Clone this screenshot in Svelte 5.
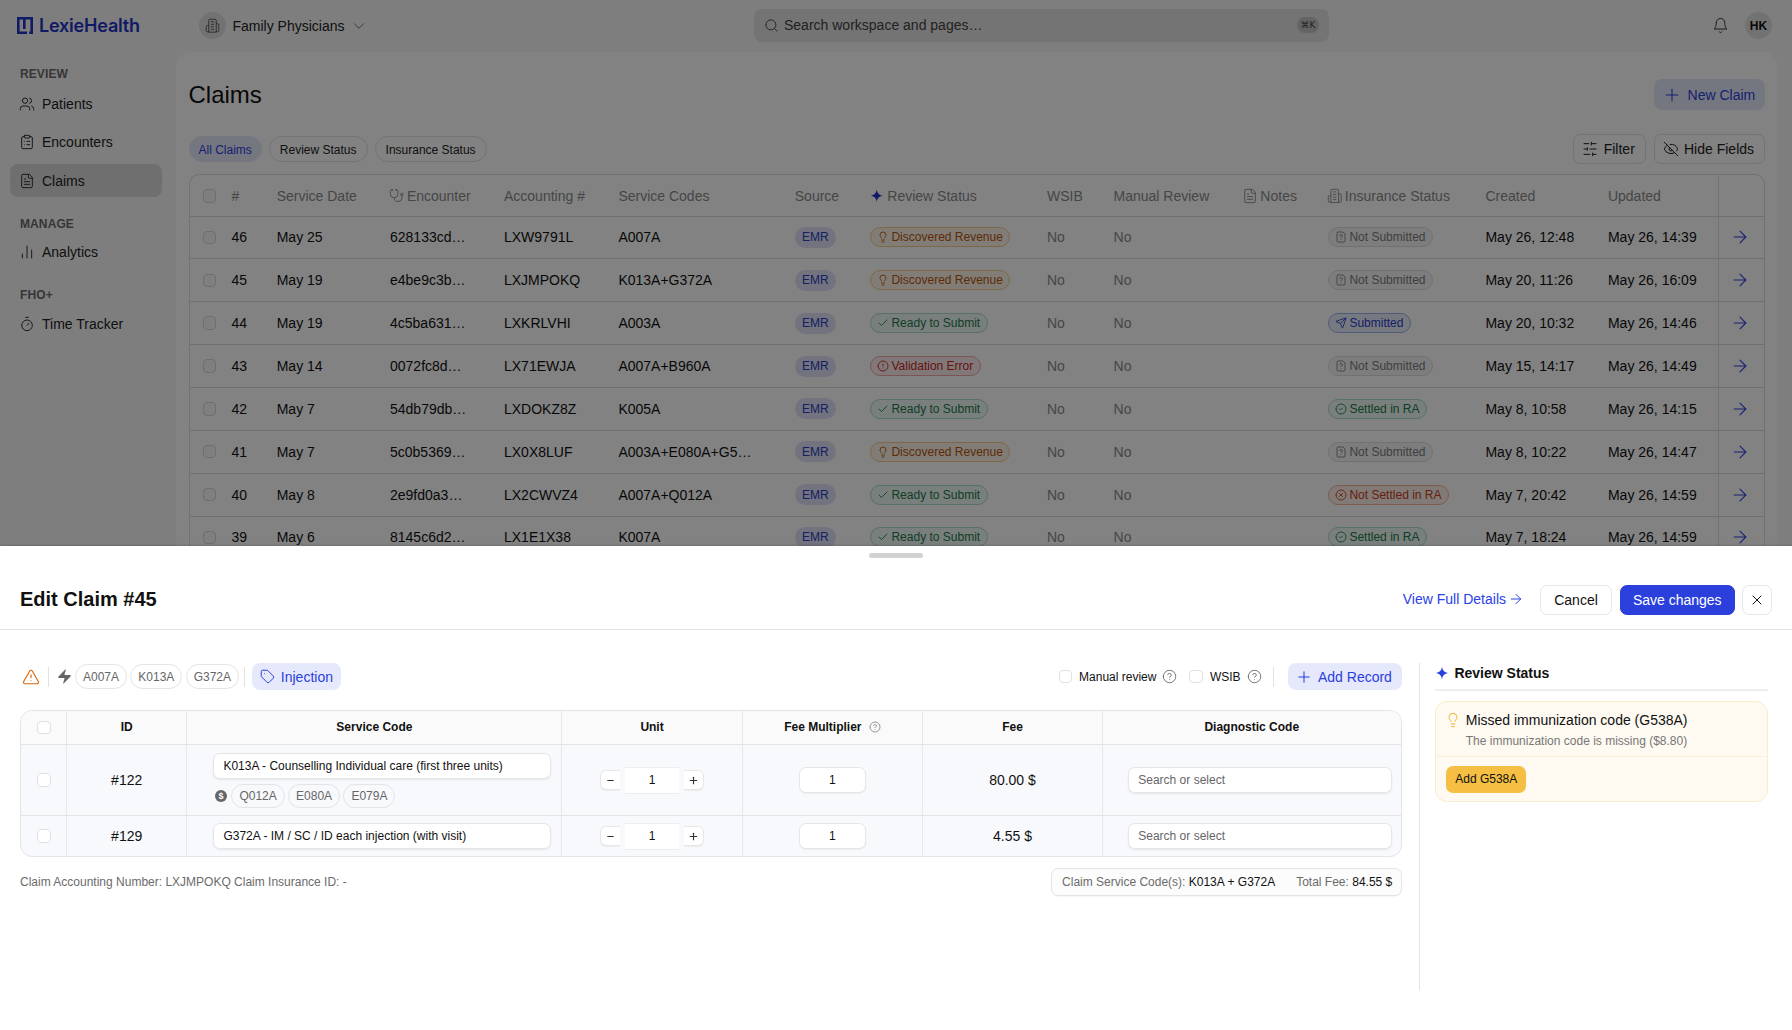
<script>
  const circ = (cx, cy, r) => `M${cx - r} ${cy}a${r} ${r} 0 1 0 ${2 * r} 0a${r} ${r} 0 1 0 ${-2 * r} 0`;
  const ring = circ(12, 12, 10);
  const icons = {
    users: ['M16 21v-2a4 4 0 0 0-4-4H6a4 4 0 0 0-4 4v2', circ(9, 7, 4), 'M22 21v-2a4 4 0 0 0-3-3.87', 'M16 3.13a4 4 0 0 1 0 7.75'],
    clipboard: ['M9 2h6a1 1 0 0 1 1 1v2a1 1 0 0 1-1 1H9a1 1 0 0 1-1-1V3a1 1 0 0 1 1-1z', 'M16 4h2a2 2 0 0 1 2 2v14a2 2 0 0 1-2 2H6a2 2 0 0 1-2-2V6a2 2 0 0 1 2-2h2', 'M12 11h4', 'M12 16h4', 'M8 11h.01', 'M8 16h.01'],
    file: ['M15 2H6a2 2 0 0 0-2 2v16a2 2 0 0 0 2 2h12a2 2 0 0 0 2-2V7Z', 'M14 2v4a2 2 0 0 0 2 2h4', 'M10 9H8', 'M16 13H8', 'M16 17H8'],
    chart: ['M5 21v-6', 'M12 21V3', 'M19 21V9'],
    timer: ['M10 2h4', 'M12 14l3-3', circ(12, 14, 8)],
    building: ['M6 22V4a2 2 0 0 1 2-2h8a2 2 0 0 1 2 2v18Z', 'M6 12H4a2 2 0 0 0-2 2v6a2 2 0 0 0 2 2h2', 'M18 9h2a2 2 0 0 1 2 2v9a2 2 0 0 1-2 2h-2', 'M10 6h4', 'M10 10h4', 'M10 14h4', 'M10 18h4'],
    search: [circ(11, 11, 8), 'm21 21-4.3-4.3'],
    bell: ['M6 8a6 6 0 0 1 12 0c0 7 3 9 3 9H3s3-2 3-9', 'M10.3 21a1.94 1.94 0 0 0 3.4 0'],
    chevron: ['m6 9 6 6 6-6'],
    plus: ['M5 12h14', 'M12 5v14'],
    minus: ['M6 12h12'],
    sliders: ['M21 4h-7', 'M10 4H3', 'M21 12h-9', 'M8 12H3', 'M21 20h-5', 'M12 20H3', 'M14 2v4', 'M8 10v4', 'M16 18v4'],
    eyeoff: ['M10.733 5.076a10.744 10.744 0 0 1 11.205 6.575 1 1 0 0 1 0 .696 10.747 10.747 0 0 1-1.444 2.49', 'M14.084 14.158a3 3 0 0 1-4.242-4.242', 'M17.479 17.499a10.75 10.75 0 0 1-15.417-5.151 1 1 0 0 1 0-.696 10.75 10.75 0 0 1 4.446-5.143', 'm2 2 20 20'],
    steth: ['M11 2v2', 'M5 2v2', 'M5 3H4a2 2 0 0 0-2 2v4a6 6 0 0 0 12 0V5a2 2 0 0 0-2-2h-1', 'M8 15a6 6 0 0 0 12 0v-3', circ(20, 10, 2)],
    bulb: ['M15 14c.2-1 .7-1.7 1.5-2.5 1-.9 1.5-2.2 1.5-3.5A6 6 0 0 0 6 8c0 1 .2 2.2 1.5 3.5.7.7 1.3 1.5 1.5 2.5', 'M9 18h6', 'M10 22h4'],
    check: ['M20 6 9 17l-5-5'],
    alert: [ring, 'M12 8v4', 'M12 16h.01'],
    filequestion: ['M12 17h.01', 'M15 2H6a2 2 0 0 0-2 2v16a2 2 0 0 0 2 2h12a2 2 0 0 0 2-2V7z', 'M9.1 9a3 3 0 0 1 5.82 1c0 2-3 3-3 3'],
    send: ['M14.536 21.686a.5.5 0 0 0 .937-.024l6.5-19a.496.496 0 0 0-.635-.635l-19 6.5a.5.5 0 0 0-.024.937l7.93 3.18a2 2 0 0 1 1.112 1.11z', 'm21.854 2.147-10.94 10.939'],
    circlecheck: [ring, 'm9 12 2 2 4-4'],
    circlex: [ring, 'm15 9-6 6', 'm9 9 6 6'],
    arrow: ['M5 12h14', 'm12 5 7 7-7 7'],
    x: ['M18 6 6 18', 'm6 6 12 12'],
    triangle: ['m21.73 18-8-14a2 2 0 0 0-3.48 0l-8 14A2 2 0 0 0 4 21h16a2 2 0 0 0 1.73-3', 'M12 9v4', 'M12 17h.01'],
    tag: ['M12.586 2.586A2 2 0 0 0 11.172 2H4a2 2 0 0 0-2 2v7.172a2 2 0 0 0 .586 1.414l8.704 8.704a2.426 2.426 0 0 0 3.42 0l6.58-6.58a2.426 2.426 0 0 0 0-3.42z', 'M7.5 7.5h.01'],
    help: [ring, 'M9.09 9a3 3 0 0 1 5.83 1c0 2-3 3-3 3', 'M12 17h.01']
  };
  const SPARK = 'M12 1C13 8 16 11 23 12C16 13 13 16 12 23C11 16 8 13 1 12C8 11 11 8 12 1Z';
  const BOLT = 'M4 14a1 1 0 0 1-.78-1.63l9.9-10.2a.5.5 0 0 1 .86.46l-1.92 6.02A1 1 0 0 0 13 10h7a1 1 0 0 1 .78 1.63l-9.9 10.2a.5.5 0 0 1-.86-.46l1.92-6.02A1 1 0 0 0 11 14z';

  const review = {
    rev: { label: 'Discovered Revenue', icon: 'bulb', cls: 'orange' },
    ready: { label: 'Ready to Submit', icon: 'check', cls: 'green' },
    err: { label: 'Validation Error', icon: 'alert', cls: 'red' }
  };
  const insurance = {
    ns: { label: 'Not Submitted', icon: 'filequestion', cls: 'gray' },
    sub: { label: 'Submitted', icon: 'send', cls: 'blue' },
    set: { label: 'Settled in RA', icon: 'circlecheck', cls: 'green' },
    nset: { label: 'Not Settled in RA', icon: 'circlex', cls: 'rust' }
  };
  const claims = [
    [46, 'May 25', '628133cd…', 'LXW9791L', 'A007A', 'rev', 'ns', 'May 26, 12:48', 'May 26, 14:39'],
    [45, 'May 19', 'e4be9c3b…', 'LXJMPOKQ', 'K013A+G372A', 'rev', 'ns', 'May 20, 11:26', 'May 26, 16:09'],
    [44, 'May 19', '4c5ba631…', 'LXKRLVHI', 'A003A', 'ready', 'sub', 'May 20, 10:32', 'May 26, 14:46'],
    [43, 'May 14', '0072fc8d…', 'LX71EWJA', 'A007A+B960A', 'err', 'ns', 'May 15, 14:17', 'May 26, 14:49'],
    [42, 'May 7', '54db79db…', 'LXDOKZ8Z', 'K005A', 'ready', 'set', 'May 8, 10:58', 'May 26, 14:15'],
    [41, 'May 7', '5c0b5369…', 'LX0X8LUF', 'A003A+E080A+G5…', 'rev', 'ns', 'May 8, 10:22', 'May 26, 14:47'],
    [40, 'May 8', '2e9fd0a3…', 'LX2CWVZ4', 'A007A+Q012A', 'ready', 'nset', 'May 7, 20:42', 'May 26, 14:59'],
    [39, 'May 6', '8145c6d2…', 'LX1E1X38', 'K007A', 'ready', 'set', 'May 7, 18:24', 'May 26, 14:59']
  ];
  const nav = [
    { title: 'REVIEW', items: [['Patients', 'users'], ['Encounters', 'clipboard'], ['Claims', 'file', true]] },
    { title: 'MANAGE', items: [['Analytics', 'chart']] },
    { title: 'FHO+', items: [['Time Tracker', 'timer']] }
  ];
</script>

{#snippet icon(name, size = 14, sw = 1.75)}
  <svg class="ic" width={size} height={size} viewBox="0 0 24 24" fill="none" stroke="currentColor" stroke-width={sw} stroke-linecap="round" stroke-linejoin="round" aria-hidden="true">
    {#each icons[name] as d}<path {d} />{/each}
  </svg>
{/snippet}

{#snippet spark(size)}
  <svg class="spark" width={size} height={size} viewBox="0 0 24 24" aria-hidden="true"><path d={SPARK} fill="currentColor" /></svg>
{/snippet}

{#snippet pill(p)}
  <span class="pill {p.cls}">{@render icon(p.icon, 12, 1.75)}{p.label}</span>
{/snippet}

{#snippet stepper()}
  <div class="stepper">
    <span class="step">{@render icon('minus', 11, 2.5)}</span>
    <span class="stepval">1</span>
    <span class="step right">{@render icon('plus', 11, 2.5)}</span>
  </div>
{/snippet}

<div class="app">
  <header class="top">
    <div class="brand">
      <svg width="16" height="17" viewBox="0 0 16 17" aria-hidden="true">
        <path d="M0 0H6V2.6H2.6V14.4H10V17H0Z M6 0H16V17H12.2V14.4H13.4V2.6H8.6V12H6Z" fill="#2233c4" />
      </svg>
      <span>LexieHealth</span>
    </div>
    <div class="workspace">
      <span class="wsicon">{@render icon('building', 15, 1.5)}</span>
      <span>Family Physicians</span>
      <span class="chev">{@render icon('chevron', 18, 1.2)}</span>
    </div>
    <div class="search">
      <span class="sicon">{@render icon('search', 15, 1.5)}</span>
      <span class="stext">Search workspace and pages…</span>
      <kbd>⌘K</kbd>
    </div>
    <div class="topright">
      <span class="bell">{@render icon('bell', 17, 1.4)}</span>
      <span class="avatar">HK</span>
    </div>
  </header>

  <div class="shell">
    <aside class="side">
      {#each nav as group}
        <div class="group">
          <div class="gtitle">{group.title}</div>
          {#each group.items as item}
            <div class="navitem" class:active={item[2]}>{@render icon(item[1], 16, 1.5)}<span>{item[0]}</span></div>
          {/each}
        </div>
      {/each}
    </aside>

    <main class="panel">
      <div class="titlerow">
        <h1>Claims</h1>
        <button class="softbtn newclaim">{@render icon('plus', 20, 1.3)}New Claim</button>
      </div>
      <div class="tabsrow">
        <div class="tabs">
          <span class="tab on">All Claims</span>
          <span class="tab">Review Status</span>
          <span class="tab">Insurance Status</span>
        </div>
        <div class="tools">
          <button class="tool filter">{@render icon('sliders', 16, 1.5)}Filter</button>
          <button class="tool hide">{@render icon('eyeoff', 16, 1.5)}Hide Fields</button>
        </div>
      </div>

      <div class="claims">
        <div class="crow chead">
          <div><span class="cbox dim"></span></div>
          <div>#</div>
          <div>Service Date</div>
          <div class="hicon">{@render icon('steth', 15.5, 1.4)}Encounter</div>
          <div>Accounting #</div>
          <div>Service Codes</div>
          <div>Source</div>
          <div class="hicon"><span class="blueic">{@render spark(13.5)}</span>Review Status</div>
          <div>WSIB</div>
          <div>Manual Review</div>
          <div class="hicon notes">{@render icon('file', 16, 1.4)}Notes</div>
          <div class="hicon">{@render icon('building', 15.5, 1.4)}Insurance Status</div>
          <div>Created</div>
          <div>Updated</div>
          <div class="lastcol"></div>
        </div>
        {#each claims as c}
          <div class="crow">
            <div><span class="cbox dim"></span></div>
            <div>{c[0]}</div>
            <div>{c[1]}</div>
            <div>{c[2]}</div>
            <div>{c[3]}</div>
            <div>{c[4]}</div>
            <div><span class="emr">EMR</span></div>
            <div>{@render pill(review[c[5]])}</div>
            <div class="muted">No</div>
            <div class="muted">No</div>
            <div></div>
            <div>{@render pill(insurance[c[6]])}</div>
            <div>{c[7]}</div>
            <div>{c[8]}</div>
            <div class="lastcol go">{@render icon('arrow', 20, 1.3)}</div>
          </div>
        {/each}
      </div>
    </main>
  </div>

  <div class="overlay"></div>

  <section class="sheet">
    <div class="handle"></div>
    <div class="sheethead">
      <h2>Edit Claim #45</h2>
      <div class="actions">
        <span class="viewlink">View Full Details {@render icon('arrow', 16, 1.5)}</span>
        <button class="btn cancel">Cancel</button>
        <button class="btn save">Save changes</button>
        <button class="btn close">{@render icon('x', 16, 1.5)}</button>
      </div>
    </div>

    <div class="sheetbody">
      <div class="editor">
        <div class="toolbar">
          <span class="warn">{@render icon('triangle', 18, 1.6)}</span>
          <span class="vline first"></span>
          <svg class="bolt" width="17" height="17" viewBox="0 0 24 24" aria-hidden="true"><path d={BOLT} fill="#666" /></svg>
          <span class="code">A007A</span>
          <span class="code">K013A</span>
          <span class="code">G372A</span>
          <span class="vline"></span>
          <span class="softbtn inj">{@render icon('tag', 15, 1.6)}Injection</span>
          <div class="spacer"></div>
          <label class="chk"><span class="cbox"></span>Manual review<span class="hlp">{@render icon('help', 15, 1.4)}</span></label>
          <label class="chk wsib"><span class="cbox"></span>WSIB<span class="hlp">{@render icon('help', 15, 1.4)}</span></label>
          <span class="vline addline"></span>
          <span class="softbtn add">{@render icon('plus', 18, 1.4)}Add Record</span>
        </div>

        <div class="rec">
          <div class="rrow rhead">
            <div><span class="cbox"></span></div>
            <div>ID</div>
            <div>Service Code</div>
            <div>Unit</div>
            <div>Fee Multiplier <span class="hlp2">{@render icon('help', 12, 1.5)}</span></div>
            <div>Fee</div>
            <div>Diagnostic Code</div>
          </div>
          <div class="rrow r1">
            <div><span class="cbox"></span></div>
            <div class="idc">#122</div>
            <div class="svc">
              <div class="field">K013A - Counselling Individual care (first three units)</div>
              <div class="subcodes">
                <span class="dollar">$</span>
                <span class="code small">Q012A</span>
                <span class="code small">E080A</span>
                <span class="code small">E079A</span>
              </div>
            </div>
            <div>{@render stepper()}</div>
            <div><span class="multi">1</span></div>
            <div class="idc">80.00 $</div>
            <div><div class="field diag">Search or select</div></div>
          </div>
          <div class="rrow r2">
            <div><span class="cbox"></span></div>
            <div class="idc">#129</div>
            <div class="svc"><div class="field">G372A - IM / SC / ID each injection (with visit)</div></div>
            <div>{@render stepper()}</div>
            <div><span class="multi">1</span></div>
            <div class="idc">4.55 $</div>
            <div><div class="field diag">Search or select</div></div>
          </div>
        </div>

        <div class="recfoot">
          <span>Claim Accounting Number: LXJMPOKQ Claim Insurance ID: -</span>
          <div class="summary">
            <span>Claim Service Code(s): <b>K013A + G372A</b></span>
            <span>Total Fee: <b>84.55 $</b></span>
          </div>
        </div>
      </div>

      <aside class="status">
        <div class="stitle"><span class="bluestrong">{@render spark(14)}</span>Review Status</div>
        <div class="card">
          <div class="cardtop">
            <span class="cbulb">{@render icon('bulb', 16, 1.5)}</span>
            <div>
              <div class="ctitle">Missed immunization code (G538A)</div>
              <div class="csub">The immunization code is missing ($8.80)</div>
            </div>
          </div>
          <div class="cardbot"><button class="addcode">Add G538A</button></div>
        </div>
      </aside>
    </div>
  </section>
</div>

<style>
  :global(body) {
    margin: 0;
    background: #fff;
    overflow: hidden;
  }
  :global(*) {
    box-sizing: border-box;
  }
  button {
    font: inherit;
    cursor: pointer;
  }
  .ic,
  .spark {
    display: block;
    flex: none;
  }

  .app {
    position: relative;
    width: 1792px;
    height: 1030px;
    overflow: hidden;
    background: #f8f8f8;
    color: #111;
    font-family: "Liberation Sans", Arial, sans-serif;
    font-size: 14px;
  }

  /* top bar */
  .top {
    display: flex;
    align-items: center;
    height: 52px;
    padding-left: 17px;
  }
  .brand {
    display: flex;
    align-items: center;
    gap: 6px;
    width: 182px;
    margin-bottom: 2px;
    color: #2233c4;
    font-family: Inter, sans-serif;
    font-size: 18px;
    font-weight: 600;
    letter-spacing: -0.2px;
  }
  .workspace {
    display: flex;
    align-items: center;
    width: 554.5px;
    margin-bottom: 1px;
    color: #222;
  }
  .wsicon {
    display: grid;
    place-items: center;
    width: 27px;
    height: 27px;
    margin-right: 6.5px;
    border-radius: 50%;
    background: #e0e0e0;
    color: #555;
  }
  .chev {
    margin-left: 5px;
    color: #666;
  }
  .search {
    display: flex;
    align-items: center;
    width: 575.5px;
    height: 33px;
    margin-bottom: 2px;
    padding: 0 10px 0 10px;
    border-radius: 8px;
    background: #e3e3e3;
    color: #444;
  }
  .stext {
    flex: 1;
    margin-left: 5.5px;
  }
  kbd {
    display: grid;
    place-items: center;
    width: 22px;
    height: 16px;
    border-radius: 8px;
    background: #c4c4c4;
    color: #444;
    font-family: "DejaVu Sans", "Liberation Sans", sans-serif;
    font-size: 9px;
  }
  .topright {
    display: flex;
    align-items: center;
    margin-left: 382.5px;
    margin-bottom: 1px;
  }
  .bell {
    color: #333;
  }
  .avatar {
    display: grid;
    place-items: center;
    width: 27px;
    height: 27px;
    margin-left: 16.5px;
    border-radius: 50%;
    background: #e0e0e0;
    font-size: 12px;
    font-weight: 700;
  }

  /* shell */
  .shell {
    display: flex;
    height: 978px;
  }
  .side {
    width: 176px;
    padding: 13px 14.5px 0 10px;
  }
  .group {
    margin-bottom: 17.5px;
  }
  .gtitle {
    height: 16.5px;
    padding-left: 10px;
    color: #6b6b6b;
    font-size: 12px;
    font-weight: 700;
    line-height: 18px;
    letter-spacing: 0.1px;
  }
  .group + .group .gtitle {
    height: 15.5px;
  }
  .navitem {
    display: flex;
    align-items: center;
    gap: 7.3px;
    height: 33px;
    margin-top: 5.5px;
    padding-left: 8.7px;
    border-radius: 8px;
    color: #222;
  }
  .navitem .ic {
    color: #333;
  }
  .navitem.active {
    background: #dadada;
  }

  .panel {
    flex: 1;
    margin-right: 14px;
    padding: 27px 13px 0 12.5px;
    border-radius: 16px 16px 0 0;
    background: #fff;
  }
  .titlerow {
    display: flex;
    align-items: center;
    justify-content: space-between;
    height: 31px;
  }
  h1 {
    margin: 0;
    font-size: 24px;
    font-weight: 400;
  }
  .softbtn {
    display: flex;
    align-items: center;
    border: 0;
    border-radius: 8px;
    background: #e6e9fb;
    color: #2a40dd;
  }
  .newclaim {
    gap: 5.6px;
    width: 111px;
    height: 31px;
    padding-left: 8px;
  }
  .tabsrow {
    display: flex;
    align-items: center;
    justify-content: space-between;
    height: 30px;
    margin-top: 24px;
  }
  .tabs {
    display: flex;
    gap: 7px;
  }
  .tab {
    display: grid;
    place-items: center;
    height: 26.5px;
    padding: 1px 10px 0;
    border: 1px solid #e2e2e2;
    border-radius: 14px;
    color: #222;
    font-size: 12px;
  }
  .tab.on {
    padding: 1px 9px 0;
    border-color: #e6e9fb;
    background: #e6e9fb;
    color: #2a40dd;
  }
  .tools {
    display: flex;
    gap: 8px;
  }
  .tool {
    display: flex;
    align-items: center;
    height: 30px;
    padding: 0 0 0 8.8px;
    border: 1px solid #e2e2e2;
    border-radius: 7px;
    background: #fff;
    color: #222;
  }
  .filter {
    gap: 5.4px;
    width: 73px;
  }
  .hide {
    gap: 5.5px;
    width: 111.5px;
    padding-left: 8px;
  }

  .claims {
    margin-top: 10px;
    border: 1px solid #e0e0e0;
    border-bottom: 0;
    border-radius: 10px 10px 0 0;
    overflow: hidden;
  }
  .crow {
    display: grid;
    grid-template-columns: 42px 45.2px 113.3px 114px 114.4px 176.4px 75.2px 177px 66.6px 130.8px 83.6px 157.5px 122.5px 110px 1fr;
    align-items: stretch;
    height: 42.86px;
    border-top: 1px solid #dcdcdc;
  }
  .chead {
    height: 40.5px;
    padding-top: 1px;
    border-top: 0;
    color: #8a8a8a;
  }
  .crow > div {
    display: flex;
    align-items: center;
    min-width: 0;
    white-space: nowrap;
  }
  .crow > div:first-child {
    padding-left: 13px;
  }
  .hicon {
    gap: 2.7px;
  }
  .hicon > :global(.ic) {
    margin-left: -1.3px;
  }
  .notes > :global(.ic) {
    margin-left: -2.7px;
  }
  .blueic {
    margin-right: 1.2px;
    color: #2233c4;
  }
  .muted {
    color: #8a8a8a;
  }
  .lastcol {
    border-left: 1px solid #e0e0e0;
  }
  .go {
    justify-content: center;
    padding-right: 3px;
    color: #2a40dd;
  }
  .cbox {
    display: block;
    flex: none;
    width: 13.5px;
    height: 13.5px;
    border: 1px solid #e0e0e0;
    border-radius: 4px;
    background: #fff;
  }
  .cbox.dim {
    border-color: #d8d8d8;
    background: #fafafa;
  }
  .emr {
    display: grid;
    place-items: center;
    width: 41px;
    height: 21px;
    border-radius: 11px;
    background: #dfe2f8;
    color: #2a3fc0;
    font-size: 12px;
  }
  .pill {
    display: inline-flex;
    align-items: center;
    gap: 2px;
    height: 20px;
    padding: 0 6.5px;
    border: 1px solid;
    border-radius: 10px;
    font-size: 12px;
  }
  .orange {
    border-color: #f5cb8d;
    background: #fdf6e8;
    color: #b8540e;
  }
  .green {
    border-color: #a9dcc4;
    background: #eef9f3;
    color: #1f7a4e;
  }
  .red {
    border-color: #f2a5a5;
    background: #fdeeee;
    color: #c81e1e;
  }
  .rust {
    border-color: #f6b59b;
    background: #fdf0ea;
    color: #c9401a;
  }
  .gray {
    border-color: #dedede;
    background: #f6f6f6;
    color: #7c7c7c;
  }
  .blue {
    border-color: #9db0ef;
    background: #e9edfc;
    color: #2a40c8;
  }

  .overlay {
    position: absolute;
    inset: 0;
    background: rgba(0, 0, 0, 0.49);
  }

  /* bottom sheet */
  .sheet {
    position: absolute;
    left: 0;
    right: 0;
    bottom: 0;
    height: 484px;
    background: #fff;
    box-shadow: 0 -1px 2px rgba(0, 0, 0, 0.15);
  }
  .handle {
    position: absolute;
    top: 7px;
    left: 869px;
    width: 54px;
    height: 5px;
    border-radius: 3px;
    background: #d2d2d2;
  }
  .sheethead {
    display: flex;
    align-items: center;
    justify-content: space-between;
    height: 83.5px;
    padding: 39.5px 20px 13.5px;
    border-bottom: 1px solid #e3e3e3;
  }
  h2 {
    margin: -1px 0 0;
    font-size: 20px;
    font-weight: 700;
  }
  .actions {
    display: flex;
    align-items: center;
  }
  .viewlink {
    display: flex;
    align-items: center;
    gap: 2px;
    margin: -2px 16px 0 0;
    color: #2a40e8;
  }
  .btn {
    display: grid;
    place-items: center;
    height: 30px;
    padding: 0;
    border: 1px solid #e6e6e6;
    border-radius: 7px;
    background: #fff;
    color: #111;
  }
  .cancel {
    width: 72px;
  }
  .save {
    width: 114.5px;
    margin-left: 8px;
    border-color: #2a3fdc;
    background: #2a3fdc;
    color: #fff;
  }
  .close {
    width: 30px;
    margin-left: 7.5px;
  }

  .sheetbody {
    display: flex;
    padding: 33.5px 24px 0 20px;
  }
  .editor {
    width: 1382.6px;
    margin-right: 17.7px;
  }
  .toolbar {
    display: flex;
    align-items: center;
    height: 27px;
  }
  .warn {
    margin-left: 2px;
    color: #dc6a10;
  }
  .vline {
    width: 1px;
    height: 20px;
    margin: 0 7px 0 2px;
    background: #e2e2e2;
  }
  .vline.first {
    margin: 0 7px 0 7.5px;
  }
  .bolt {
    margin-right: 2.5px;
    flex: none;
  }
  .code {
    flex: none;
    display: grid;
    place-items: center;
    height: 25px;
    margin-right: 3.3px;
    padding: 0 7px;
    border: 1px solid #e4e4e4;
    border-radius: 13px;
    color: #666;
    font-size: 12px;
  }
  .inj {
    gap: 5.5px;
    width: 88.6px;
    height: 27px;
    padding-left: 8px;
  }
  .spacer {
    flex: 1;
  }
  .chk {
    display: flex;
    align-items: center;
    font-size: 12px;
  }
  .chk .cbox {
    margin-right: 7px;
  }
  .hlp {
    margin-left: 6px;
    color: #666;
  }
  .wsib {
    margin-left: 12px;
  }
  .vline.addline {
    margin: 0 13.5px 0 11.85px;
  }
  .add {
    gap: 5px;
    width: 113.6px;
    height: 27px;
    padding-left: 7px;
  }

  .rec {
    margin-top: 19.7px;
    border: 1px solid #e4e4e4;
    border-radius: 12px;
    overflow: hidden;
    background: #f8f9fc;
  }
  .rrow {
    display: grid;
    grid-template-columns: 45px 120.4px 375px 180.3px 180.3px 180px 1fr;
    border-bottom: 1px solid #e4e4e4;
  }
  .rrow:last-child {
    border-bottom: 0;
  }
  .rrow > div {
    display: flex;
    align-items: center;
    justify-content: center;
    border-left: 1px solid #e8e8e8;
  }
  .rrow > div:first-child {
    border-left: 0;
    padding-left: 1px;
  }
  .rhead {
    height: 34.5px;
    background: #fafafa;
    font-size: 12px;
    font-weight: 700;
  }
  .hlp2 {
    margin-left: 7px;
    color: #777;
  }
  .r1 {
    height: 71px;
  }
  .r2 {
    height: 40px;
  }
  .rrow > .svc {
    flex-direction: column;
    align-items: stretch;
    justify-content: flex-start;
    padding: 7px 10px 0 25.5px;
  }
  .r1 > .svc {
    padding-top: 8px;
  }
  .field {
    display: flex;
    align-items: center;
    height: 26px;
    padding-left: 9.5px;
    border: 1px solid #e6e6e6;
    border-radius: 7px;
    background: #fff;
    box-shadow: 0 1px 2px rgba(0, 0, 0, 0.08);
    font-size: 12px;
  }
  .subcodes {
    display: flex;
    align-items: center;
    margin-top: 5px;
  }
  .dollar {
    display: grid;
    place-items: center;
    width: 12px;
    height: 12px;
    margin: 0 4.5px 0 2px;
    border-radius: 50%;
    background: #666;
    color: #fff;
    font-size: 9px;
    font-weight: 700;
  }
  .code.small {
    height: 24px;
  }
  .idc {
    font-size: 14px;
  }
  .stepper {
    display: flex;
    align-items: center;
  }
  .step {
    display: grid;
    place-items: center;
    width: 20px;
    height: 20px;
    border: 1px solid #e6e6e6;
    border-right: 0;
    border-radius: 6px 0 0 6px;
    background: #fff;
    box-shadow: 0 1px 1px rgba(0, 0, 0, 0.05);
    color: #333;
  }
  .step.right {
    border: 1px solid #e6e6e6;
    border-left: 0;
    border-radius: 0 6px 6px 0;
  }
  .stepval {
    display: grid;
    place-items: center;
    width: 53.5px;
    height: 27px;
    margin: 0 5px;
    border-top: 1px solid #eee;
    border-bottom: 1px solid #eee;
    background: #fff;
    font-size: 12px;
  }
  .multi {
    display: grid;
    place-items: center;
    width: 67px;
    height: 26px;
    border: 1px solid #e6e6e6;
    border-radius: 7px;
    background: #fff;
    box-shadow: 0 1px 1px rgba(0, 0, 0, 0.05);
    font-size: 12px;
  }
  .diag {
    width: 264px;
    margin-left: 16px;
    color: #666;
  }
  .recfoot {
    display: flex;
    align-items: center;
    justify-content: space-between;
    margin-top: 10.5px;
    color: #6b6b6b;
    font-size: 12px;
  }
  .summary {
    display: flex;
    align-items: center;
    gap: 21px;
    width: 351px;
    height: 28px;
    padding-left: 10.5px;
    border: 1px solid #e4e4e4;
    border-radius: 7px;
    background: #fcfcfc;
    box-shadow: 0 1px 1px rgba(0, 0, 0, 0.04);
  }
  b {
    color: #111;
    font-weight: 400;
  }

  .status {
    width: 349px;
    height: 327px;
    padding-left: 14.5px;
    border-left: 1px solid #e3e3e3;
  }
  .stitle {
    display: flex;
    align-items: center;
    gap: 5.7px;
    height: 28px;
    padding-bottom: 6px;
    border-bottom: 2px solid #eee;
    font-weight: 700;
  }
  .bluestrong {
    color: #2a40dd;
  }
  .card {
    margin-top: 9.7px;
    width: 333px;
    border: 1px solid #fbeccb;
    border-radius: 12px;
    background: #fefaf1;
  }
  .cardtop {
    display: flex;
    height: 55px;
    padding: 10px 0 0 9px;
    border-bottom: 1px solid #f8f0dc;
    gap: 5px;
  }
  .cbulb {
    color: #f0b429;
  }
  .ctitle {
    line-height: 16px;
  }
  .csub {
    margin-top: 6px;
    color: #777;
    font-size: 12px;
  }
  .cardbot {
    height: 44px;
    padding: 9px 0 0 10.5px;
  }
  .addcode {
    width: 80px;
    height: 27px;
    padding: 0;
    border: 0;
    border-radius: 7px;
    background: #f4bf42;
    color: #111;
    font-size: 12px;
  }
</style>
